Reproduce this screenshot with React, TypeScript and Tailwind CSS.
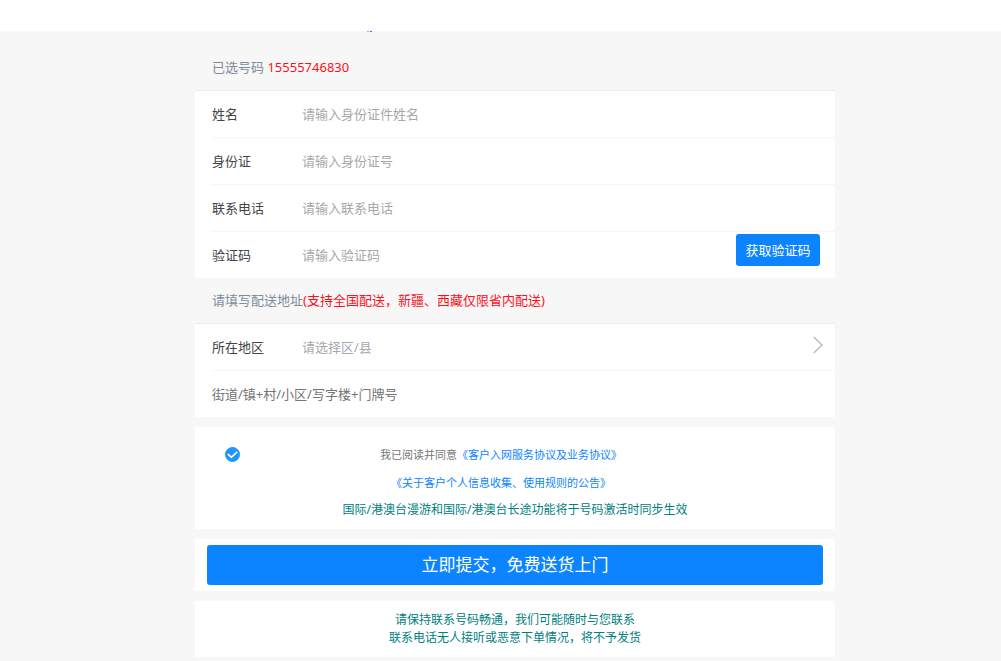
import type { ReactNode } from "react";

interface FieldRowProps {
  id: string;
  label: string;
  placeholder: string;
  type?: string;
  children?: ReactNode;
}

const inputClass =
  "flex-1 min-w-0 h-full bg-transparent outline-none text-[13px] text-[#555] placeholder:text-[#a5a8ad]";

function FieldRow({
  id,
  label,
  placeholder,
  type = "text",
  children,
}: FieldRowProps) {
  return (
    <div className="flex items-center h-[47px] ml-[17px] border-b border-[#f6f6f6] last:border-b-0 last:h-[46px]">
      <label htmlFor={id} className="w-[90px] text-[#444]">
        {label}
      </label>
      <input
        id={id}
        type={type}
        placeholder={placeholder}
        className={inputClass}
      />
      {children}
    </div>
  );
}

export default function App() {
  return (
    <div className="min-h-screen bg-[#f7f7f7] text-[13px] leading-5 font-['Noto_Sans','Noto_Sans_CJK_SC',sans-serif]">
      <div className="h-[31px] bg-white"></div>
      <main className="pl-[29px] pb-1">
        <form
          className="max-w-[640px] mx-auto"
          onSubmit={(e) => e.preventDefault()}
        >
          <div className="flex gap-px h-px pl-[172px]">
            <span className="w-0.5 bg-[#7db8f5]"></span>
            <span className="w-0.5 bg-[#2f7fd0]"></span>
          </div>
          <h2 className="pt-[25px] pb-[13px] pl-[17px] text-[#7f8b9b]">
            已选号码 <span className="text-[#ff0f1a]">15555746830</span>
          </h2>

          <section className="bg-white border-t border-[#ededed]">
            <FieldRow id="name" label="姓名" placeholder="请输入身份证件姓名" />
            <FieldRow id="idcard" label="身份证" placeholder="请输入身份证号" />
            <FieldRow
              id="phone"
              label="联系电话"
              placeholder="请输入联系电话"
              type="tel"
            />
            <FieldRow id="code" label="验证码" placeholder="请输入验证码">
              <button
                type="button"
                className="self-start mt-0.5 mr-[15px] w-[84px] h-8 rounded-[3px] bg-[#0c84ff] text-white"
              >
                获取验证码
              </button>
            </FieldRow>
          </section>

          <h2 className="pt-3 pb-[13px] pl-[17px] text-[#7f8b9b]">
            请填写配送地址
            <span className="text-[#ff0f1a]">
              (支持全国配送，新疆、西藏仅限省内配送)
            </span>
          </h2>

          <section className="bg-white border-t border-[#ededed]">
            <div className="flex items-center h-[47px] ml-[17px] pr-3 border-b border-[#f6f6f6]">
              <label htmlFor="region" className="w-[90px] text-[#444]">
                所在地区
              </label>
              <select
                id="region"
                defaultValue=""
                className="flex-1 h-full appearance-none bg-transparent outline-none text-[#a5a8ad]"
              >
                <option value="">请选择区/县</option>
              </select>
              <svg
                className="w-[10px] h-[18px] mb-1"
                viewBox="0 0 10 18"
                fill="none"
                stroke="#b4b4b4"
                strokeWidth="1.2"
              >
                <path d="M0.8 1L9 9L0.8 17" />
              </svg>
            </div>
            <div className="flex items-center h-[46px] ml-[17px]">
              <input
                aria-label="详细地址"
                placeholder="街道/镇+村/小区/写字楼+门牌号"
                className="flex-1 h-full bg-transparent outline-none text-[#555] placeholder:text-[#757575]"
              />
            </div>
          </section>

          <section className="mt-[10px] pt-[14px] pb-[6px] bg-white text-center">
            <div className="flex items-start pl-[30px] pr-[73px] text-[11px] leading-7">
              <span className="relative flex mt-[6px]">
                <input
                  id="agree"
                  type="checkbox"
                  defaultChecked
                  className="peer appearance-none w-[15px] h-[15px] rounded-full border border-[#1e96fa] checked:bg-[#1e96fa]"
                />
                <svg
                  className="absolute inset-0 w-[15px] h-[15px] pointer-events-none opacity-0 peer-checked:opacity-100"
                  viewBox="0 0 15 15"
                  fill="none"
                  stroke="#fff"
                  strokeWidth="1.7"
                >
                  <path d="M2.8 7L6.3 10.4L12.2 4.8" />
                </svg>
              </span>
              <div className="flex-1 text-[#777]">
                <label htmlFor="agree">我已阅读并同意</label>
                <a href="#service" className="text-[#0c84ff]">
                  《客户入网服务协议及业务协议》
                </a>
                <a href="#privacy" className="block text-[#0c84ff]">
                  《关于客户个人信息收集、使用规则的公告》
                </a>
              </div>
            </div>
            <p className="text-xs leading-[26px] text-[#008080]">
              国际/港澳台漫游和国际/港澳台长途功能将于号码激活时同步生效
            </p>
          </section>

          <div className="mt-[10px] px-3 py-[6px] bg-white">
            <button
              type="submit"
              className="block w-full h-10 rounded-[3px] bg-[#0c84ff] text-white text-[17px]"
            >
              立即提交，免费送货上门
            </button>
          </div>

          <div className="mt-[10px] py-[10px] bg-white text-center text-xs leading-[18px] text-[#008080]">
            <p>请保持联系号码畅通，我们可能随时与您联系</p>
            <p>联系电话无人接听或恶意下单情况，将不予发货</p>
          </div>
        </form>
      </main>
    </div>
  );
}
